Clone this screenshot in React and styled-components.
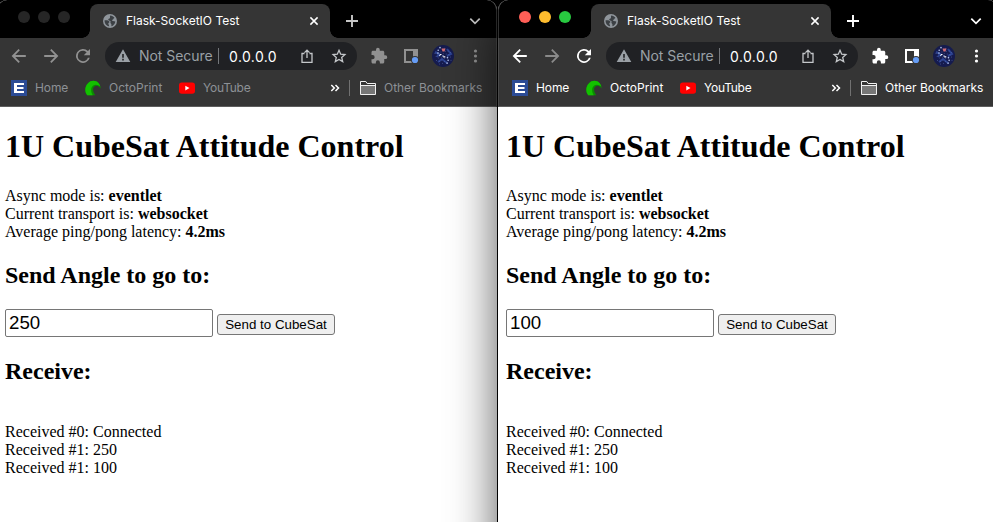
import React from 'react';
import styled, { createGlobalStyle } from 'styled-components';

const GlobalStyle = createGlobalStyle`
  body { margin: 0; background: #000; overflow: hidden; }
  * { box-sizing: border-box; }
`;

const Desktop = styled.div`
  display: flex;
  gap: 1px;
  width: 993px;
  height: 522px;
  overflow: hidden;
  background: #000;
`;

const Window = styled.section`
  flex: 0 0 500px;
  height: 560px;
  display: flex;
  flex-direction: column;
  background: #fff;
  border-radius: 10px 10px 0 0;
  font-family: Inter, 'Liberation Sans', sans-serif;
  color: ${(p) => (p.$active ? '#fff' : '#8d9196')};
  &:first-child { margin-left: -3px; }
  ${(p) => p.$active && 'box-shadow: 0 0 0 1px #000, 0 20px 48px rgba(0, 0, 0, 0.68); z-index: 1;'}
`;

const TabStrip = styled.div`
  display: flex;
  align-items: flex-start;
  height: 38px;
  background: #000;
  border: 0 solid #303030;
  border-width: 0 1px;
  border-radius: 10px 10px 0 0;
`;

const Lights = styled.div`
  display: flex;
  gap: 8px;
  width: 92px;
  padding: 11px 0 0 20px;
`;

const Light = styled.span`
  width: 12px;
  height: 12px;
  border-radius: 50%;
  background: ${(p) => p.$color};
`;

const Tab = styled.div`
  display: flex;
  align-items: center;
  width: 240px;
  height: 34px;
  margin-top: 4px;
  padding: 0 10px 0 13px;
  border-radius: 8px 8px 0 0;
  background: #353535;
  position: relative;
  &::before, &::after {
    content: '';
    position: absolute;
    bottom: 0;
    width: 8px;
    height: 8px;
  }
  &::before { left: -8px; background: radial-gradient(circle at 0 0, transparent 7.5px, #353535 8px); }
  &::after { right: -8px; background: radial-gradient(circle at 100% 0, transparent 7.5px, #353535 8px); }
`;

const TabTitle = styled.span`
  flex: 1;
  margin-left: 9px;
  color: #fff;
  font-size: 12px;
  line-height: 16px;
  white-space: nowrap;
`;

const StripIcons = styled.div`
  flex: 1;
  display: flex;
  justify-content: space-between;
  padding: 13px 13px 0 14px;
`;

const Toolbar = styled.div`
  display: flex;
  align-items: center;
  height: 36px;
  padding-left: 13px;
  background: #353535;
  border: 0 solid #4a4a4a;
  border-width: 0 1px;
`;

const NavIcons = styled.div`
  display: flex;
  gap: 16px;
  width: 94px;
`;

const Omnibox = styled.div`
  display: flex;
  align-items: center;
  width: 252px;
  height: 28px;
  padding: 0 10px;
  border-radius: 14px;
  background: #202124;
  color: #9aa0a6;
  font-size: 14px;
  white-space: nowrap;
`;

const Security = styled.span`
  width: 80px;
  height: 16px;
  margin: 0 10px 0 8px;
  border-right: 1px solid #74777b;
  line-height: 16px;
  letter-spacing: -0.05px;
`;

const Address = styled.span`
  width: 70px;
  color: #fff;
  letter-spacing: 0.4px;
`;

const OmniIcons = styled.div`
  display: flex;
  gap: 16px;
  color: #c4c7ca;
`;

const Extensions = styled.div`
  display: flex;
  align-items: center;
  gap: 13px;
  margin-left: 13px;
`;

const MenuGroup = styled.div`
  display: flex;
  align-items: center;
  gap: 13px;
  margin-left: 2px;
`;

const Bookmarks = styled.div`
  display: flex;
  align-items: center;
  height: 33px;
  padding: 0 0 5px 13px;
  background: #353535;
  border: 0 solid #4a4a4a;
  border-width: 0 1px 1px;
  border-bottom-color: #5d5d5d;
  font-size: 12px;
  line-height: 16px;
  white-space: nowrap;
`;

const Bookmark = styled.span`
  display: flex;
  flex: none;
  gap: 8px;
  width: ${(p) => p.$width}px;
  letter-spacing: ${(p) => p.$spacing || 0}px;
`;

const Overflow = styled.span`
  display: flex;
  flex: none;
  align-items: center;
  justify-content: flex-end;
  width: 99px;
  height: 16px;
  padding-right: 9px;
  margin-right: 10px;
  border-right: 1px solid #717171;
  color: #fff;
`;

const Page = styled.main`
  flex: 1;
  padding: 0 8px;
  background: #fff;
  color: #000;
  font-family: 'Liberation Serif', serif;
  font-size: 16px;
  line-height: 18px;
`;

const Title = styled.h1`
  margin: 21px 0 22px;
  font-size: 32px;
  line-height: 37px;
`;

const Heading = styled.h2`
  margin: 20px 0;
  font-size: 24px;
  line-height: 28px;
`;

const Status = styled.p`
  margin: 0;
`;

const AngleForm = styled.form`
  display: flex;
  align-items: flex-start;
  gap: 4px;
  height: 28px;
`;

const AngleInput = styled.input`
  width: 208px;
  height: 28px;
  margin: 0;
  padding: 0 3px 1px;
  border: 1px solid #767676;
  border-radius: 2px;
  background: #fff;
  color: #000;
  font: 18.7px 'Liberation Sans', sans-serif;
`;

const SendButton = styled.button`
  width: 118px;
  height: 21px;
  margin: 5px 0 0;
  padding: 0;
  border: 1px solid #767676;
  border-radius: 3px;
  background: #efefef;
  color: #000;
  font: 13.33px 'Liberation Sans', sans-serif;
  white-space: nowrap;
`;

const Log = styled.div`
  margin-top: 38px;
`;

const Icon = styled.svg`
  display: block;
  flex: none;
  width: ${(p) => p.$size || 16}px;
  height: ${(p) => p.$size || 16}px;
  fill: ${(p) => (p.$stroke ? 'none' : 'currentColor')};
  stroke: ${(p) => (p.$stroke ? 'currentColor' : 'none')};
  stroke-width: ${(p) => p.$stroke || 0};
  opacity: ${(p) => (p.$dim ? 0.42 : 1)};
`;

const IconTone = styled.div`
  display: contents;
  color: ${(p) => (p.$active ? '#fff' : '#919191')};
`;

const StripTone = styled.div`
  display: contents;
  color: ${(p) => (p.$active ? '#fff' : '#c6c6c6')};
`;

const Globe = () => (
  <Icon viewBox="0 0 16 16" $size={14}>
    <circle cx="8" cy="8" r="8" fill="#8f959b" />
    <path d="M1.8 7.2c2.4-.2 4.7 0 5.4 1.3.5 1-.3 1.5-1 1.8-.5 1.4.8 2 .8 3.9C4 13.7 1.6 11 1.8 7.2zM8.2 1.8c2 .1 3.9 1.1 5 2.8-1.2 0-1.2 1.8-2.4 2-.8.2-.6 1.200.5 1.300 1 .1 2 .2 2.800.6-.3 2.600-2.200 4.900-4.600 5.500.2-1.500.4-2-.3-3-.7-.8-1-1.400-.4-2.200-.2-1.400-2.400-.9-2.800-2.200-.2-1.300 1.500-1.100 1.900-1.900.4-.8-.2-1.900.3-2.900z" fill="#3c4044" />
  </Icon>
);

const stars = Array.from({ length: 30 }, (_, i) => {
  const angle = i * 2.4;
  const radius = Math.sqrt(i / 30) * 9.2;
  return { x: 11 + radius * Math.cos(angle), y: 11 + radius * Math.sin(angle), i };
});

const Avatar = () => (
  <Icon viewBox="0 0 22 22" $size={22}>
    <circle cx="11" cy="11" r="11" fill="#151b4e" />
    <path d="M3 7l4 2-2 3M15 4l4 5-4 2M6 17l4-3 5 4" stroke="#2c4290" strokeWidth="2" fill="none" />
    {stars.map((s) => (
      <circle key={s.i} cx={s.x} cy={s.y} r={s.i % 4 ? 0.45 : 0.8} fill={s.i % 4 ? '#6476b8' : '#b4c4ee'} />
    ))}
    <path d="M9.5 3.5h4l-1 3h-2z" fill="#cf6b73" />
    <path d="M11.3 11.2h2v1.4h-2zM8 9h1.5v1H8z" fill="#fff" />
  </Icon>
);

function BrowserWindow({ active, angle }) {
  const lights = active ? ['#ff5f57', '#febc2e', '#28c840'] : ['#262626', '#262626', '#262626'];
  return (
    <Window $active={active}>
      <TabStrip>
        <Lights>{lights.map((c, i) => <Light key={i} $color={c} />)}</Lights>
        <Tab>
          <Globe />
          <TabTitle>Flask-SocketIO Test</TabTitle>
          <StripTone $active>
            <Icon viewBox="0 0 12 12" $size={12} $stroke={1.5}><path d="M2.4 2.4l7.2 7.2M9.6 2.4l-7.2 7.2" /></Icon>
          </StripTone>
        </Tab>
        <StripTone $active={active}>
          <StripIcons>
            <Icon viewBox="0 0 16 16" $stroke={1.9}><path d="M8 2v12M2 8h12" /></Icon>
            <Icon viewBox="0 0 16 16" $stroke={1.7}><path d="M3.3 5.6L8 10.3l4.7-4.7" /></Icon>
          </StripIcons>
        </StripTone>
      </TabStrip>
      <Toolbar>
        <IconTone $active={active}>
          <NavIcons>
            <Icon viewBox="0 0 16 16" $stroke={1.8}><path d="M14.8 8H2.4M8.2 1.7L1.9 8l6.3 6.3" /></Icon>
            <Icon viewBox="0 0 16 16" $stroke={1.8} $dim={active}><path d="M1.2 8h12.4M7.8 1.7L14.1 8l-6.3 6.3" /></Icon>
            <Icon viewBox="0 0 16 16">
              <path d="M12.95 3.05A7 7 0 1 0 14.77 9.8h-1.9A5.2 5.2 0 1 1 8 2.8c1.44 0 2.72.6 3.66 1.54L8.8 7.2H15V1z" />
            </Icon>
          </NavIcons>
        </IconTone>
        <Omnibox>
          <Icon viewBox="0 0 16 16">
            <path fillRule="evenodd" d="M8 1.3L.7 14h14.6zM7.2 6h1.6v3.7H7.2zm0 4.8h1.6v1.6H7.2z" />
          </Icon>
          <Security>Not Secure</Security>
          <Address>0.0.0.0</Address>
          <OmniIcons>
            <Icon viewBox="0 0 16 16" $stroke={1.3}><path d="M5.5 5.5H3v8.8h10V5.5h-2.5M8 10V2.5M5.5 4.6L8 2.1l2.5 2.5" /></Icon>
            <Icon viewBox="0 0 16 16" $stroke={1.3}><path d="M8 2.3l1.7 3.9 4.2.4-3.2 2.8 1 4.2L8 11.4l-3.7 2.2 1-4.2-3.2-2.8 4.2-.4z" /></Icon>
          </OmniIcons>
        </Omnibox>
        <IconTone $active={active}>
          <Extensions>
            <Icon viewBox="0 0 24 24" $size={18}>
              <path d="M20.5 11H19V7c0-1.1-.9-2-2-2h-4V3.5a2.5 2.5 0 0 0-5 0V5H4c-1.1 0-2 .9-2 2v3.8h1.5a2.7 2.7 0 0 1 0 5.4H2V20c0 1.1.9 2 2 2h3.8v-1.5a2.7 2.7 0 0 1 5.4 0V22H17c1.1 0 2-.9 2-2v-4h1.5a2.5 2.5 0 0 0 0-5z" />
            </Icon>
            <MenuGroup>
              <Icon viewBox="0 0 16 16">
                <path fillRule="evenodd" d="M1 1h14v14H1zM3 3v10h7V3z" />
                <circle cx="12" cy="12" r="4" fill="#353535" />
                <circle cx="12" cy="12" r="3.1" fill="#669df6" />
              </Icon>
              <Avatar />
              <Icon viewBox="0 0 16 16"><circle cx="8.5" cy="3" r="1.6" /><circle cx="8.5" cy="8" r="1.6" /><circle cx="8.5" cy="13" r="1.6" /></Icon>
            </MenuGroup>
          </Extensions>
        </IconTone>
      </Toolbar>
      <Bookmarks>
        <Bookmark $width={74} $spacing={-0.1}>
          <Icon viewBox="0 0 16 16"><path d="M0 0h16v16H0z" fill="#2b4b95" /><path d="M3 3h10v2H6v2h6.5v2H6v2h7v2H3z" fill="#fff" /></Icon>
          Home
        </Bookmark>
        <Bookmark $width={94}>
          <Icon viewBox="0 0 16 16">
            <path d="M2.3 15.3C-.6 12-.3 6.500 2.800 3.400 6-.1 11 .2 13.500 3c1.300 1.500 2 3.300 2.200 5.600-1.600-2.400-3.600-3.500-5.600-2.500-3 1.500-2.500 5.500.2 9.200z" fill="#0a8c00" />
            <path d="M2.3 15.3C-.6 12-.3 6.500 2.800 3.400 6-.1 11 .2 13.500 3c.9 1 1.600 2.200 1.900 3.600C13.200 4.500 10.200 4 8.200 5.500c-2.700 2-2.700 6-.4 9.800z" fill="#13c100" />
          </Icon>
          OctoPrint
        </Bookmark>
        <Bookmark $width={72} $spacing={-0.25}>
          <Icon viewBox="0 0 16 16"><rect y="2.4" width="16" height="11.4" rx="2.8" fill="#f00" /><path d="M6.3 5.7v4.8L10.5 8.1z" fill="#fff" /></Icon>
          YouTube
        </Bookmark>
        <Overflow>
          <Icon viewBox="0 0 10 10" $size={10} $stroke={1.5}><path d="M1.3 2l3 3-3 3M5.5 2l3 3-3 3" /></Icon>
        </Overflow>
        <Bookmark $width={125} $spacing={-0.03}>
          <Icon viewBox="0 0 16 16"><path d="M.5 14.5v-13h5.3l1.4 2h8.3v11zM.5 5.5h15" fill="#777" stroke="#f0f0f0" strokeWidth="1" /><path d="M1 2h4.5l1.4 2H15v1H1z" fill="#353535" /></Icon>
          Other Bookmarks
        </Bookmark>
      </Bookmarks>
      <Page>
        <Title>1U CubeSat Attitude Control</Title>
        <Status>
          Async mode is: <b>eventlet</b><br />
          Current transport is: <b>websocket</b><br />
          Average ping/pong latency: <b>4.2ms</b>
        </Status>
        <Heading>Send Angle to go to:</Heading>
        <AngleForm onSubmit={(e) => e.preventDefault()}>
          <AngleInput type="text" defaultValue={angle} />
          <SendButton type="submit">Send to CubeSat</SendButton>
        </AngleForm>
        <Heading>Receive:</Heading>
        <Log>
          Received #0: Connected<br />
          Received #1: 250<br />
          Received #1: 100
        </Log>
      </Page>
    </Window>
  );
}

export default function App() {
  return (
    <>
      <GlobalStyle />
      <Desktop>
        <BrowserWindow angle="250" />
        <BrowserWindow active angle="100" />
      </Desktop>
    </>
  );
}
